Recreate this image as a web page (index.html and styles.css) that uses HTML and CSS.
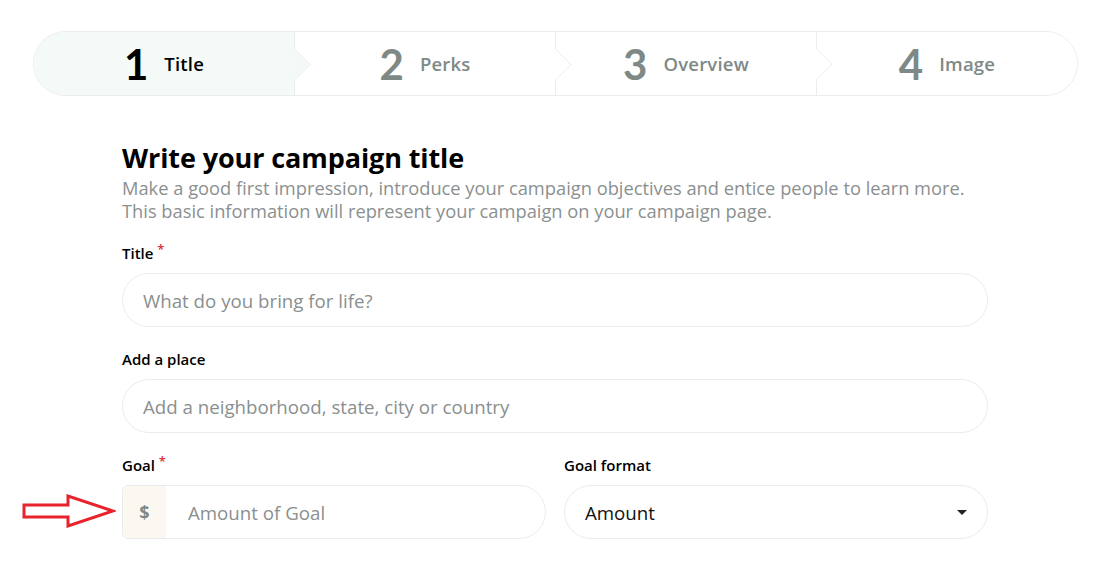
FILE: index.html
```html
<!DOCTYPE html>
<html>
<head>
<meta charset="utf-8">
<link rel="stylesheet" href="styles.css">
</head>
<body>
<div class="page">
  <nav class="stepper">
    <div class="step active"><span class="num">1</span><span class="lbl">Title</span></div>
    <div class="step"><span class="num">2</span><span class="lbl">Perks</span></div>
    <div class="step"><span class="num">3</span><span class="lbl">Overview</span></div>
    <div class="step last"><span class="num">4</span><span class="lbl">Image</span></div>
  </nav>

  <main class="form">
    <h1 class="heading">Write your campaign title</h1>
    <p class="desc">Make a good first impression, introduce your campaign objectives and entice people to learn more. This basic information will represent your campaign on your campaign page.</p>

    <div class="field first">
      <label class="label">Title <span class="req">*</span></label>
      <div class="input"><span class="ph">What do you bring for life?</span></div>
    </div>

    <div class="field">
      <label class="label">Add a place</label>
      <div class="input"><span class="ph">Add a neighborhood, state, city or country</span></div>
    </div>

    <div class="row">
      <div class="field">
        <label class="label">Goal <span class="req">*</span></label>
        <div class="input goal">
          <span class="prefix">$</span>
          <span class="ph">Amount of Goal</span>
          <svg class="arrow" width="94" height="34" viewBox="0 0 94 34"><path d="M2 11 H46 V2 L91 17 L46 32 V23 H2 Z" fill="none" stroke="#e8232b" stroke-width="3" stroke-linejoin="miter"/></svg>
        </div>
      </div>
      <div class="field">
        <label class="label">Goal format</label>
        <div class="input select"><span class="val">Amount</span><span class="caret"></span></div>
      </div>
    </div>
  </main>
</div>
</body>
</html>
```

FILE: styles.css
```css
* { box-sizing: border-box; }
html, body { margin: 0; padding: 0; background: #fff; }
body { font-family: "Open Sans", "Liberation Sans", sans-serif; color: #111; }

.page { padding-top: 31px; }

.stepper {
  display: flex;
  width: 1045px;
  height: 65px;
  margin-left: 33px;
  border: 1px solid #ececec;
  border-radius: 33px;
  overflow: hidden;
}
.step {
  flex: 1;
  position: relative;
  display: flex;
  align-items: center;
  justify-content: center;
  gap: 16px;
  border-right: 1px solid #ececec;
  background: #fff;
}
.step.last { border-right: none; }
.step::after {
  content: "";
  position: absolute;
  right: -12px;
  top: 50%;
  width: 22px;
  height: 22px;
  margin-top: -11px;
  background: inherit;
  border-top: 1px solid #f1f1f1;
  border-right: 1px solid #f1f1f1;
  transform: rotate(45deg);
  z-index: 2;
}
.step.last::after { display: none; }
.step.active { background: #f4faf8; }
.num {
  font-family: "Lato", sans-serif;
  font-weight: 700;
  font-size: 42px;
  line-height: 1;
  color: #7e8986;
}
.lbl {
  font-size: 18.5px;
  font-weight: 600;
  color: #7e8986;
  letter-spacing: 0.2px;
}
.active .num { color: #000; }
.active .lbl { color: #000; }

.form {
  width: 866px;
  margin: 44px 0 0 122px;
}
.heading {
  margin: 0;
  font-size: 27px;
  font-weight: 700;
  line-height: 36px;
  color: #000;
  letter-spacing: -0.1px;
}
.desc {
  margin: 0;
  font-size: 18.3px;
  line-height: 23px;
  color: #8b9090;
}
.field { margin-top: 22px; }
.field.first { margin-top: 21px; }
.label {
  display: block;
  font-size: 15px;
  font-weight: 600;
  color: #000;
  line-height: 20px;
  margin-bottom: 10px;
}
.req { color: #e0303a; font-size: 13px; vertical-align: top; position: relative; top: -4px; }

.input {
  height: 54px;
  border: 1px solid #ebebeb;
  border-radius: 27px;
  display: flex;
  align-items: center;
  padding-left: 20px;
  background: #fff;
}
.ph { font-size: 18.7px; color: #8a8f8f; }

.row {
  display: grid;
  grid-template-columns: 424px 424px;
  column-gap: 18px;
}

.goal { position: relative; padding-left: 0; border-radius: 6px 27px 27px 6px; }
.prefix {
  width: 43px;
  align-self: stretch;
  display: flex;
  align-items: center;
  justify-content: center;
  background: #fbf8f1;
  border-radius: 5px 0 0 5px;
  font-size: 18px;
  font-weight: 700;
  color: #7e8986;
  margin-right: 22px;
}
.arrow { position: absolute; left: -101px; top: 8px; }

.select { justify-content: space-between; padding-right: 20px; }
.val { font-size: 18.7px; color: #111; }
.caret {
  width: 0; height: 0;
  border-left: 5px solid transparent;
  border-right: 5px solid transparent;
  border-top: 5px solid #222;
}
```
